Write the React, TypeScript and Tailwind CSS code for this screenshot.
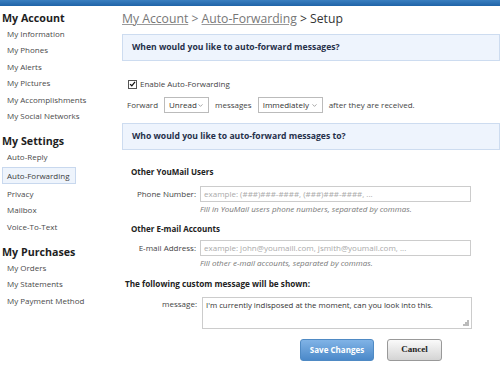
import { ChevronDown } from "lucide-react"

const sections = [
  {
    title: "My Account",
    items: ["My Information", "My Phones", "My Alerts", "My Pictures", "My Accomplishments", "My Social Networks"],
  },
  {
    title: "My Settings",
    items: ["Auto-Reply", "Auto-Forwarding", "Privacy", "Mailbox", "Voice-To-Text"],
  },
  {
    title: "My Purchases",
    items: ["My Orders", "My Statements", "My Payment Method"],
  },
]

function Sidebar() {
  return (
    <div className="w-[120px] shrink-0 pl-[2px] pt-[5px]">
      {sections.map((s) => (
        <div key={s.title} className="mb-[10px]">
          <h2 className="whitespace-nowrap text-[10.7px] font-bold leading-[15px] text-[#1e1e1e]">{s.title}</h2>
          <ul>
            {s.items.map((item) =>
              item === "Auto-Forwarding" ? (
                <li
                  key={item}
                  className="mb-[2px] mt-[1px] h-[17px] w-[74px] whitespace-nowrap border border-[#c8d8ee] bg-[#eef4fc] pl-[4px] text-[8px] leading-[15px] text-[#3c3c3c]"
                >
                  {item}
                </li>
              ) : (
                <li key={item} className="h-[16.4px] whitespace-nowrap pl-[5px] text-[8px] leading-[16px] text-[#4a4a4a]">
                  {item}
                </li>
              )
            )}
          </ul>
        </div>
      ))}
    </div>
  )
}

function Select({ value, width }: { value: string; width: string }) {
  return (
    <div
      className={`mx-[6px] flex h-[16px] items-center justify-between whitespace-nowrap border border-[#bbb] bg-white pl-[4px] pr-[4px] text-[8px] text-[#333] ${width}`}
    >
      <span>{value}</span>
      <ChevronDown size={7} strokeWidth={2.2} className="text-[#777]" />
    </div>
  )
}

function Banner({ children }: { children: string }) {
  return (
    <div className="h-[27px] border border-[#cddcf0] bg-[#eef4fd] pl-[9px] text-[8.6px] font-bold leading-[25px] text-[#26304a]">
      {children}
    </div>
  )
}

function Field({ label, placeholder, hint }: { label: string; placeholder: string; hint: string }) {
  return (
    <div className="flex">
      <div className="w-[78px] whitespace-nowrap pr-[4px] text-right text-[8px] leading-[16px] text-[#444]">{label}</div>
      <div className="flex-1">
        <div className="h-[16px] w-[271px] whitespace-nowrap border border-[#ccc] bg-white pl-[3px] text-[8px] leading-[14px] text-[#aaa]">
          {placeholder}
        </div>
        <div className="mt-[1px] whitespace-nowrap text-[8px] italic leading-[12px] text-[#777]">{hint}</div>
      </div>
    </div>
  )
}

export default function App() {
  return (
    <div className="h-[375px] w-[500px] overflow-hidden bg-white" style={{ fontFamily: '"Open Sans", sans-serif' }}>
      <div className="h-[6px] bg-gradient-to-b from-[#3a7fc0] to-[#1f64a8]" />
      <div className="flex">
        <Sidebar />
        <div className="min-w-0 flex-1 pl-[2px] pt-[3px]">
          <div className="whitespace-nowrap text-[12.2px] leading-[20px] text-[#777]">
            <span className="underline decoration-[#999]">My Account</span>
            <span> &gt; </span>
            <span className="underline decoration-[#999]">Auto-Forwarding</span>
            <span className="text-[#333]"> &gt; Setup</span>
          </div>
          <div className="mt-[5px]">
            <Banner>When would you like to auto-forward messages?</Banner>
          </div>
          <div className="mt-[17px] flex h-[12px] items-center pl-[6px] text-[8px] text-[#444]">
            <span className="mr-[3px] flex h-[9px] w-[9px] items-center justify-center border border-[#555] bg-white">
              <svg viewBox="0 0 10 10" className="h-[8px] w-[8px]">
                <path d="M1.5 5.2 L4 7.6 L8.6 2" fill="none" stroke="#111" strokeWidth="1.8" />
              </svg>
            </span>
            Enable Auto-Forwarding
          </div>
          <div className="mt-[7px] flex h-[16px] items-center whitespace-nowrap pl-[5px] text-[8px] text-[#444]">
            <span>Forward</span>
            <Select value="Unread" width="w-[45px]" />
            <span>messages</span>
            <Select value="Immediately" width="w-[65px]" />
            <span>after they are received.</span>
          </div>
          <div className="mt-[10px]">
            <Banner>Who would you like to auto-forward messages to?</Banner>
          </div>
          <div className="mt-[16px] pl-[9px] text-[8px] font-bold leading-[12px] text-[#222]">Other YouMail Users</div>
          <div className="mt-[8px]">
            <Field
              label="Phone Number:"
              placeholder="example: (###)###-####, (###)###-####, ..."
              hint="Fill in YouMail users phone numbers, separated by commas."
            />
          </div>
          <div className="mt-[8px] pl-[9px] text-[8px] font-bold leading-[12px] text-[#222]">Other E-mail Accounts</div>
          <div className="mt-[5px]">
            <Field
              label="E-mail Address:"
              placeholder="example: john@youmaill.com, jsmith@youmail.com, ..."
              hint="Fill other e-mail accounts, separated by commas."
            />
          </div>
          <div className="mt-[9px] whitespace-nowrap pl-[3px] text-[8.2px] font-bold leading-[12px] text-[#222]">
            The following custom message will be shown:
          </div>
          <div className="mt-[7px] flex">
            <div className="w-[80px] pr-[5px] pt-[1px] text-right text-[8px] leading-[12px] text-[#444]">message:</div>
            <div className="relative h-[32px] w-[270px] border border-[#ccc] bg-white pl-[3px] pt-[1px] text-[7.8px] leading-[12px] text-[#333]">
              I'm currently indisposed at the moment, can you look into this.
              <svg viewBox="0 0 6 6" className="absolute bottom-[2px] right-[2px] h-[6px] w-[6px]">
                <rect x="4" y="0" width="2" height="2" fill="#bbb" />
                <rect x="2" y="2" width="2" height="2" fill="#bbb" />
                <rect x="4" y="2" width="2" height="2" fill="#bbb" />
                <rect x="0" y="4" width="2" height="2" fill="#bbb" />
                <rect x="2" y="4" width="2" height="2" fill="#bbb" />
                <rect x="4" y="4" width="2" height="2" fill="#bbb" />
              </svg>
            </div>
          </div>
          <div className="mt-[10px] flex pl-[178px]">
            <button className="h-[22px] w-[74px] rounded-[3px] border border-[#4f8ac4] bg-gradient-to-b from-[#80b3e6] to-[#4b89c9] text-[8px] font-bold text-white">
              Save Changes
            </button>
            <button
              className="ml-[13px] h-[22px] w-[55px] rounded-[3px] border border-[#999] bg-gradient-to-b from-[#fafafa] to-[#d4d4d4] text-[9px] font-bold text-[#222]"
              style={{ fontFamily: '"Liberation Serif", serif' }}
            >
              Cancel
            </button>
          </div>
        </div>
      </div>
    </div>
  )
}
